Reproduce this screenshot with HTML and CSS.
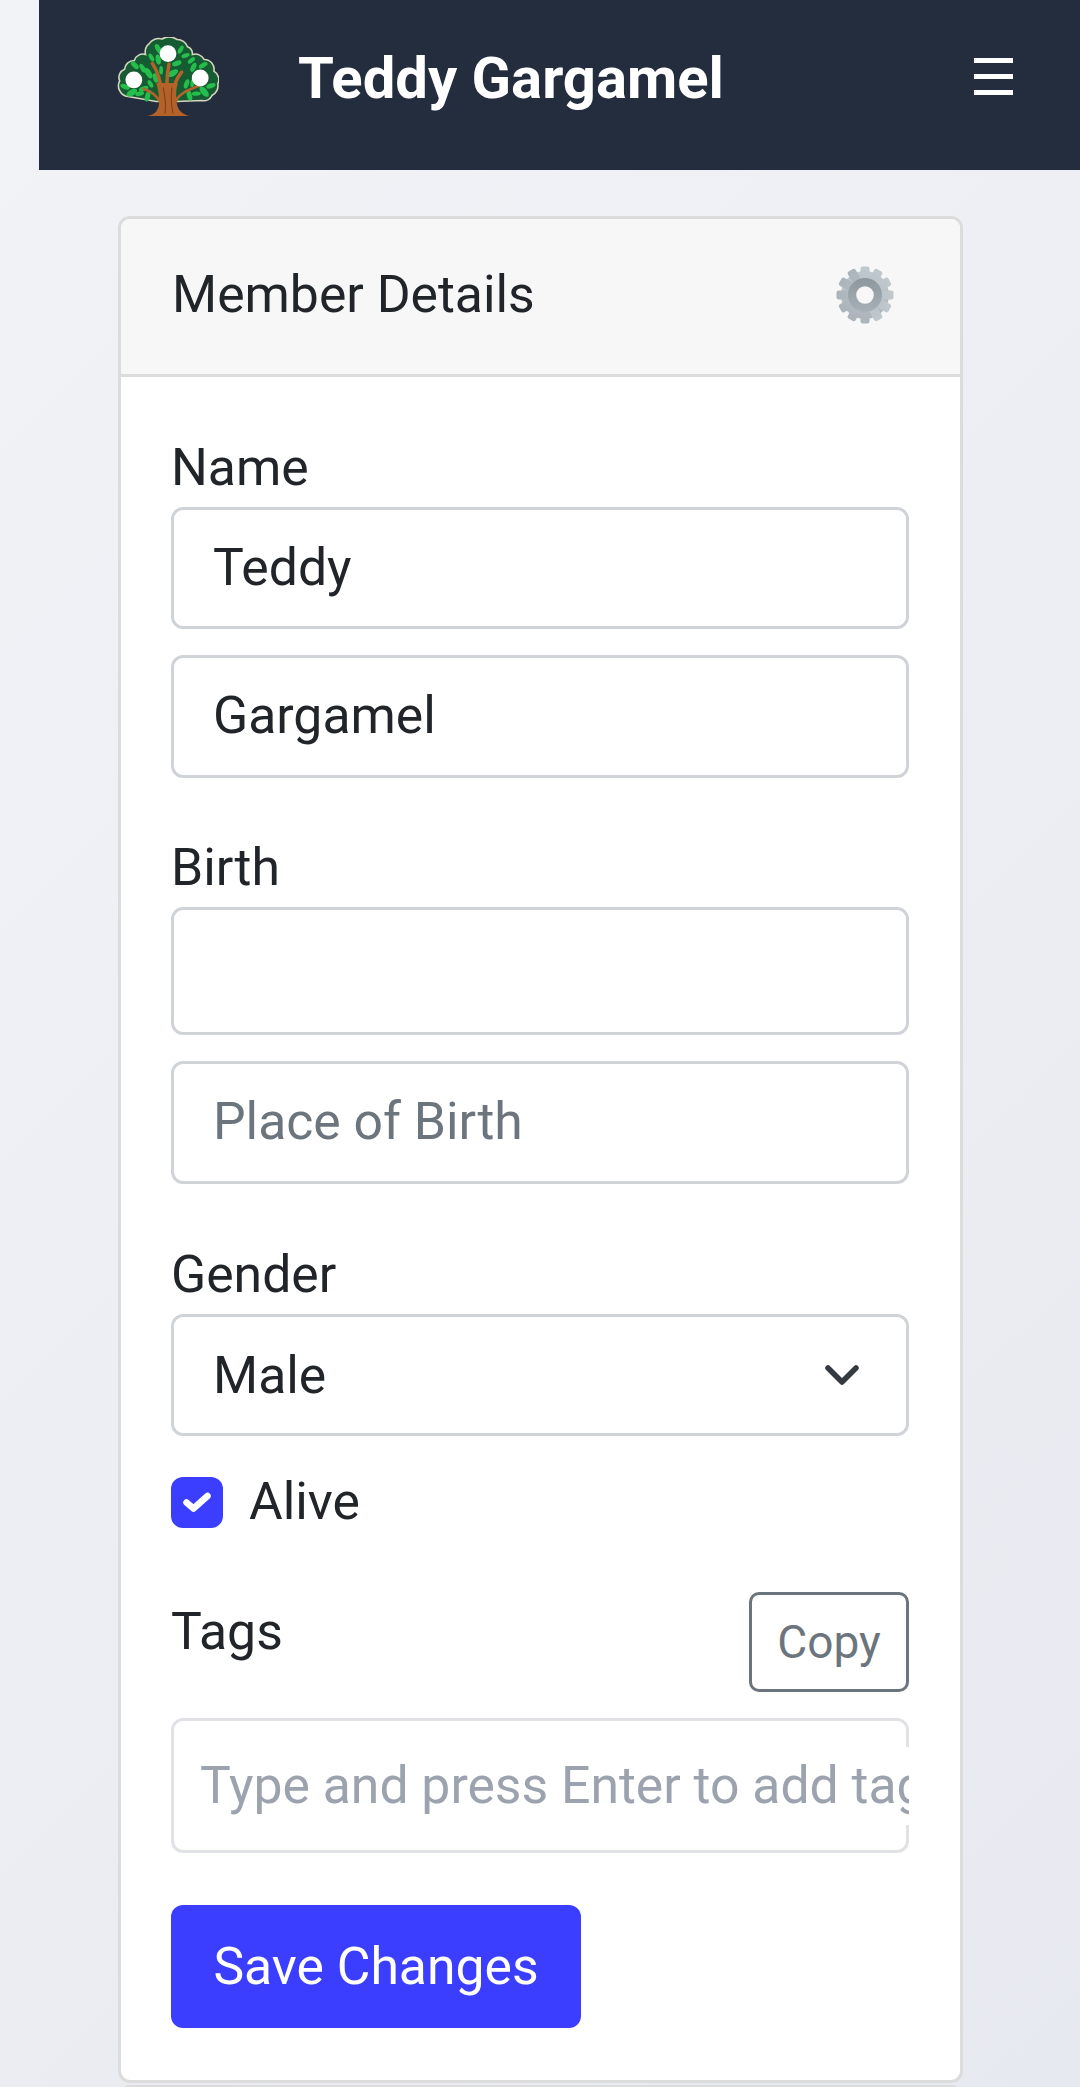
FILE: index.html
```html
<!DOCTYPE html>
<html lang="en">
<head>
  <meta charset="UTF-8">
  <title>Teddy Gargamel</title>
  <link rel="stylesheet" href="styles.css">
</head>
<body>
  <div class="page">
    <header class="topbar">
      <svg class="logo" viewBox="0 0 104 84" aria-hidden="true">
        <path class="crown" d="M11 61A11 11 0 0 1 2.5 45A9 9 0 0 1 7.5 33A10 10 0 0 1 17.5 24A9 9 0 0 1 29 18A11 11 0 0 1 32.5 7A12 12 0 0 1 46 2A14 14 0 0 1 61 2.5A11 11 0 0 1 72 10A8 8 0 0 1 77 18A10 10 0 0 1 89 23A10 10 0 0 1 99 35A10 10 0 0 1 103 48A11 11 0 0 1 97 60A9 9 0 0 1 87 65L60 66L40 66Z"/>
        <g class="leaves">
          <ellipse cx="42" cy="12" rx="2.6" ry="5.2" transform="rotate(-30 42 12)"/>
          <ellipse cx="65" cy="13" rx="2.2" ry="4.6" transform="rotate(30 65 13)"/>
          <ellipse cx="35" cy="21" rx="2.2" ry="4.4" transform="rotate(-30 35 21)"/>
          <ellipse cx="42" cy="23" rx="2.6" ry="5.2" transform="rotate(-10 42 23)"/>
          <ellipse cx="70" cy="19" rx="2.2" ry="4.4" transform="rotate(70 70 19)"/>
          <ellipse cx="76" cy="24" rx="2.2" ry="4.4" transform="rotate(50 76 24)"/>
          <ellipse cx="61" cy="27" rx="2.6" ry="5" transform="rotate(70 61 27)"/>
          <ellipse cx="57" cy="37" rx="3" ry="6" transform="rotate(60 57 37)"/>
          <ellipse cx="78" cy="31" rx="2.6" ry="5" transform="rotate(25 78 31)"/>
          <ellipse cx="88" cy="29" rx="2.4" ry="5" transform="rotate(60 88 29)"/>
          <ellipse cx="18" cy="29" rx="2.6" ry="5" transform="rotate(-45 18 29)"/>
          <ellipse cx="26" cy="32" rx="2.4" ry="5" transform="rotate(-30 26 32)"/>
          <ellipse cx="32" cy="37" rx="3" ry="6" transform="rotate(-30 32 37)"/>
          <ellipse cx="39" cy="42" rx="2.4" ry="5" transform="rotate(-20 39 42)"/>
          <ellipse cx="45" cy="34" rx="2" ry="4.4"/>
          <ellipse cx="71" cy="48" rx="2.4" ry="5" transform="rotate(20 71 48)"/>
          <ellipse cx="77" cy="47" rx="2" ry="4.4" transform="rotate(10 77 47)"/>
          <ellipse cx="96" cy="50" rx="2.4" ry="5" transform="rotate(70 96 50)"/>
          <ellipse cx="8" cy="51" rx="2.4" ry="5" transform="rotate(-70 8 51)"/>
          <ellipse cx="34" cy="48" rx="2.2" ry="4.4" transform="rotate(-30 34 48)"/>
          <ellipse cx="27" cy="53" rx="2.4" ry="5" transform="rotate(70 27 53)"/>
          <ellipse cx="15" cy="57" rx="3.2" ry="6" transform="rotate(60 15 57)"/>
          <ellipse cx="23" cy="58" rx="2.2" ry="4.6" transform="rotate(80 23 58)"/>
          <ellipse cx="31" cy="61" rx="2.6" ry="5.2" transform="rotate(15 31 61)"/>
          <ellipse cx="74" cy="60" rx="2.6" ry="5.2" transform="rotate(-15 74 60)"/>
          <ellipse cx="81" cy="58" rx="2.2" ry="4.6" transform="rotate(85 81 58)"/>
          <ellipse cx="89" cy="56" rx="3.2" ry="6.4" transform="rotate(-40 89 56)"/>
        </g>
        <g class="trunk">
          <path class="trunk-base" d="M30 81C39 80 43 74 43 66C43 60 42 54 40 47L62 47C60 54 60 62 61 68C62 75 67 80 76 81Z"/>
          <path class="branch" d="M46 60C45 48 42 36 36 27"/>
          <path class="branch" d="M52 60C50 48 51 38 53 28"/>
          <path class="branch" d="M57 58C58 48 61 42 66 36"/>
          <path class="twig" d="M45 68C42 62 36 56 27 53"/>
          <path class="twig" d="M60 66C62 60 72 54 84 50"/>
          <path class="groove" d="M49 78C50 68 49 60 47 52M57 78C55 68 55 60 56 52"/>
        </g>
        <circle class="node" cx="17" cy="44" r="8.6"/>
        <circle class="node" cx="52" cy="17" r="8.6"/>
        <circle class="node" cx="85" cy="42" r="8.6"/>
      </svg>
      <h1 class="brand">Teddy Gargamel</h1>
      <svg class="burger" viewBox="0 0 39 37" aria-hidden="true">
        <rect y="0" width="39" height="5"/>
        <rect y="16" width="39" height="5"/>
        <rect y="32" width="39" height="5"/>
      </svg>
    </header>

    <main class="content">
      <section class="card">
        <div class="card-header">
          <span>Member Details</span>
          <svg class="gear" viewBox="0 0 58 58" aria-hidden="true">
            <defs>
              <linearGradient id="gearFill" x1="0" y1="0" x2="0" y2="1">
                <stop offset="0" stop-color="#c0c9ce"/>
                <stop offset="1" stop-color="#aab4ba"/>
              </linearGradient>
              <linearGradient id="gearRing" x1="0" y1="0" x2="0" y2="1">
                <stop offset="0" stop-color="#8d989e"/>
                <stop offset="1" stop-color="#a6b0b6"/>
              </linearGradient>
            </defs>
            <g fill="url(#gearFill)">
              <circle cx="29" cy="29" r="24"/>
              <rect x="24.5" y="0.5" width="9" height="57" rx="2"/>
              <rect x="24.5" y="0.5" width="9" height="57" rx="2" transform="rotate(30 29 29)"/>
              <rect x="24.5" y="0.5" width="9" height="57" rx="2" transform="rotate(60 29 29)"/>
              <rect x="24.5" y="0.5" width="9" height="57" rx="2" transform="rotate(90 29 29)"/>
              <rect x="24.5" y="0.5" width="9" height="57" rx="2" transform="rotate(120 29 29)"/>
              <rect x="24.5" y="0.5" width="9" height="57" rx="2" transform="rotate(150 29 29)"/>
            </g>
            <circle cx="29" cy="29" r="17" fill="url(#gearRing)"/>
            <circle cx="29" cy="29" r="8.8" fill="#f7f7f7"/>
          </svg>
        </div>

        <form class="card-body">
          <div class="group">
            <label class="field-label">Name</label>
            <input class="control" type="text" value="Teddy">
            <input class="control" type="text" value="Gargamel">
          </div>

          <div class="group">
            <label class="field-label">Birth</label>
            <input class="control control-tall" type="text">
            <input class="control" type="text" placeholder="Place of Birth">
          </div>

          <div class="group group-gender">
            <label class="field-label">Gender</label>
            <div class="select-wrap">
              <select class="control">
                <option>Male</option>
                <option>Female</option>
              </select>
              <svg class="chevron" viewBox="0 0 34 20" aria-hidden="true">
                <path d="M3 3L17 17L31 3"/>
              </svg>
            </div>
          </div>

          <label class="check-row">
            <span class="check">
              <svg viewBox="0 0 28 24" aria-hidden="true"><path d="M3.5 12.5L10.5 18.5L24.5 6"/></svg>
            </span>
            Alive
          </label>

          <div class="tags-head">
            <label class="field-label tags-label">Tags</label>
            <button class="btn-copy" type="button">Copy</button>
          </div>
          <div class="tags-box">
            <input class="tags-input" type="text" placeholder="Type and press Enter to add tags">
          </div>

          <button class="btn-save" type="button">Save Changes</button>
        </form>
      </section>
      <div class="card card-next"></div>
    </main>
  </div>
</body>
</html>
```

FILE: styles.css
```css
html, body {
  margin: 0;
  height: 100%;
}
body {
  font-family: Roboto, "Liberation Sans", sans-serif;
  background: linear-gradient(135deg, #f1f3f7 0%, #e7e9f0 100%);
  color: #212529;
  overflow: hidden;
}
.page {
  margin-left: 39px;
}
.topbar {
  display: flex;
  align-items: center;
  height: 170px;
  background: #232d3d;
  padding-left: 78px;
  padding-right: 67px;
}
.logo {
  width: 102px;
  height: 82px;
  margin-top: -14px;
  flex: none;
}
.logo .crown {
  fill: #165c33;
  stroke: #d6d5bd;
  stroke-width: 1.6;
}
.logo .leaves { fill: #25bd4c; }
.logo .trunk-base { fill: #b4622a; }
.logo .branch, .logo .twig, .logo .groove {
  fill: none;
  stroke: #b4622a;
  stroke-linecap: round;
}
.logo .branch { stroke-width: 3.6; }
.logo .twig { stroke-width: 2.6; }
.logo .groove {
  stroke: #7a3d14;
  stroke-width: 1;
}
.logo .node { fill: #fff; }
.brand {
  margin: -13px 0 0 79px;
  flex: 1;
  font-size: 58px;
  font-weight: 700;
  color: #fff;
  line-height: 1.2;
}
.burger {
  width: 39px;
  height: 37px;
  margin-top: -17px;
  fill: #fff;
  flex: none;
}
.content {
  padding: 46px 117px 0 79px;
}
.card {
  background: #fff;
  border: 3px solid #dcdcdc;
  border-radius: 12px;
  box-sizing: border-box;
}
.card-next {
  margin-top: 2px;
  height: 40px;
}
.card-header {
  display: flex;
  align-items: center;
  justify-content: space-between;
  height: 151px;
  padding: 0 66px 4px 51px;
  background: #f7f7f7;
  border-bottom: 3px solid #dcdcdc;
  border-radius: 9px 9px 0 0;
  font-size: 51.7px;
}
.gear {
  width: 58px;
  height: 58px;
}
.card-body {
  padding: 62px 51px 52px 50px;
  display: flex;
  flex-direction: column;
}
.group {
  margin-bottom: 27px;
}
.group + .group {
  margin-top: 34px;
}
.group + .group-gender {
  margin-top: 35px;
  margin-bottom: 36px;
}
.field-label {
  display: block;
  font-size: 51.7px;
  line-height: 58px;
  margin-bottom: 10px;
}
.control {
  display: block;
  width: 100%;
  height: 122px;
  box-sizing: border-box;
  padding: 0 39px;
  font: inherit;
  font-size: 51.7px;
  color: #212529;
  background: #fff;
  border: 3px solid #d0d4d8;
  border-radius: 12px;
  appearance: none;
  outline: none;
}
input.control {
  padding-bottom: 2px;
}
.control + .control {
  height: 123px;
  margin-top: 26px;
}
.control-tall {
  height: 128px;
}
.control::placeholder {
  color: #6c757d;
  opacity: 1;
}
.select-wrap {
  position: relative;
}
.chevron {
  position: absolute;
  right: 50px;
  top: 51px;
  width: 34px;
  height: 20px;
  fill: none;
  stroke: #343a40;
  stroke-width: 5.5;
  stroke-linecap: round;
  stroke-linejoin: round;
}
.check-row {
  display: flex;
  align-items: center;
  gap: 26px;
  font-size: 51.7px;
  line-height: 60px;
}
.check {
  display: flex;
  align-items: center;
  justify-content: center;
  width: 52px;
  height: 51px;
  border-radius: 12px;
  background: #3b3dff;
}
.check svg {
  width: 28px;
  height: 24px;
  fill: none;
  stroke: #fff;
  stroke-width: 6.5;
  stroke-linecap: round;
  stroke-linejoin: round;
}
.tags-head {
  display: flex;
  justify-content: space-between;
  align-items: flex-start;
  margin-top: 60px;
}
.tags-label {
  margin-top: 11px;
}
.btn-copy {
  width: 160px;
  height: 100px;
  padding: 0;
  font: inherit;
  font-size: 46px;
  color: #6c757d;
  background: transparent;
  border: 3px solid #6c757d;
  border-radius: 10px;
}
.tags-box {
  margin-top: 26px;
  height: 135px;
  box-sizing: border-box;
  border: 3px solid #e0e2e6;
  border-radius: 12px;
  display: flex;
  align-items: center;
  padding-left: 26px;
}
/* the input runs over the box's right border, as it does in the app */
.tags-input {
  flex: none;
  width: calc(100% + 3px);
  height: 78px;
  box-sizing: border-box;
  border: 0;
  outline: none;
  padding: 0;
  font: inherit;
  font-size: 51.7px;
  background: #fff;
}
.tags-input::placeholder {
  color: #9ca3af;
  opacity: 1;
}
.btn-save {
  align-self: flex-start;
  margin-top: 52px;
  width: 410px;
  height: 123px;
  padding: 0;
  font: inherit;
  font-size: 51.7px;
  color: #fff;
  background: #3b3dff;
  border: 0;
  border-radius: 12px;
}
```
